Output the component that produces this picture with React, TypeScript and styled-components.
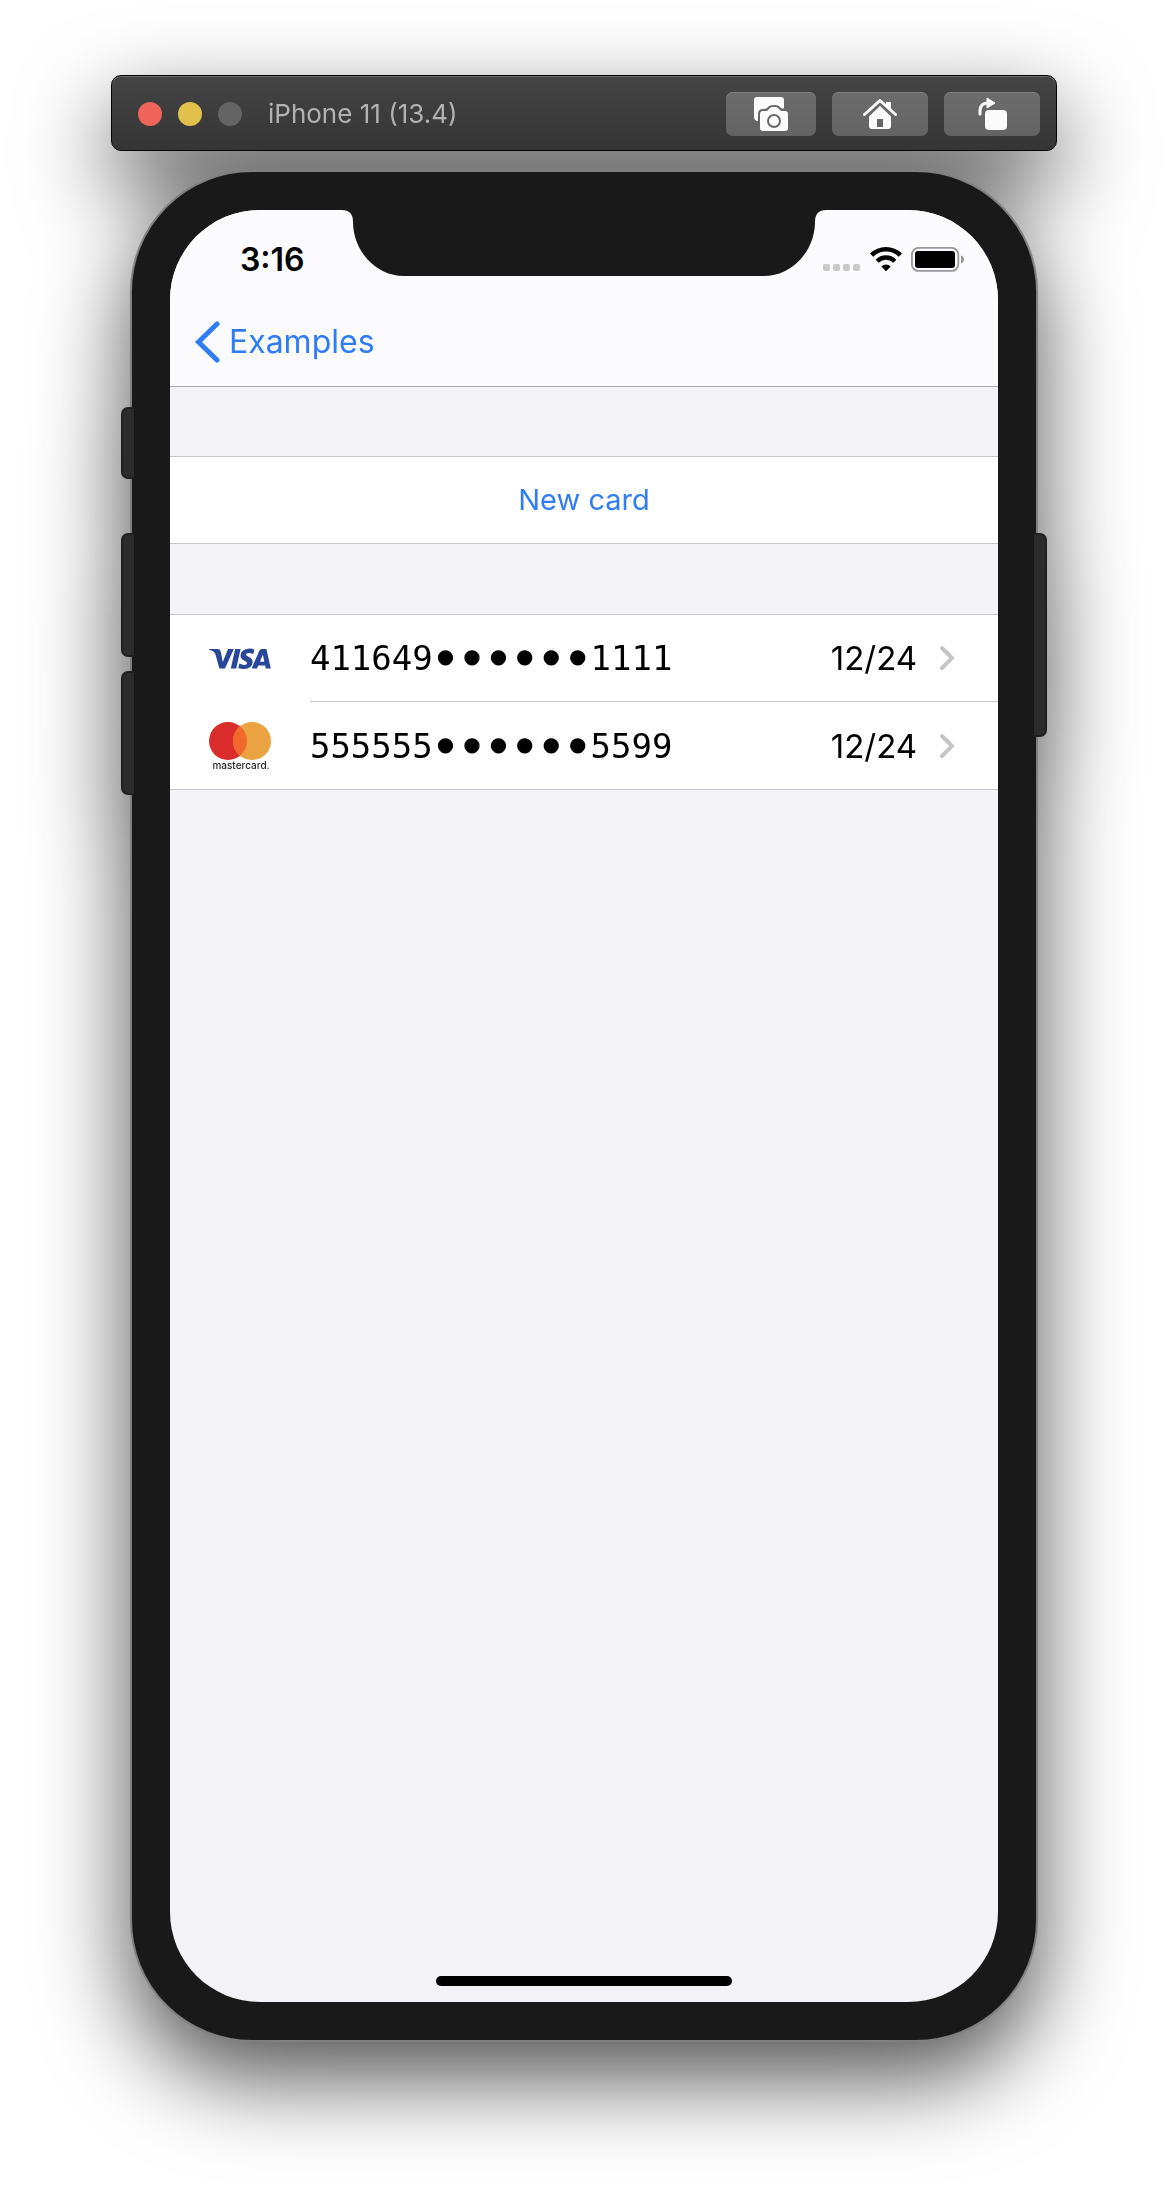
import React from "react";
import styled, { createGlobalStyle } from "styled-components";

const GlobalStyle = createGlobalStyle`
  *, *::before, *::after { box-sizing: border-box; }
  body { margin: 0; background: #ffffff; }
`;

const sans = `Inter, "Liberation Sans", sans-serif`;
const hairline = "#c6c6c8";
const tint = "#2f7cf6";

const Page = styled.main`
  display: flex;
  justify-content: center;
  padding: 75px 24px 148px;
  font-family: ${sans};
`;

const Simulator = styled.div`
  display: flex;
  flex-direction: column;
  align-items: center;
  gap: 19px;
  width: 100%;
  max-width: 946px;
  filter: drop-shadow(0 36px 45px rgba(0, 0, 0, 0.68));
`;

const Toolbar = styled.header`
  display: flex;
  align-items: center;
  justify-content: space-between;
  width: 100%;
  height: 76px;
  padding: 2px 16px 0 26px;
  border: 1px solid #050505;
  border-radius: 10px;
  background: linear-gradient(#444444, #353535);
  box-shadow: inset 0 1px 0 #6c6c6c;
`;

const WindowInfo = styled.div`
  display: flex;
  align-items: center;
  gap: 16px;
`;

const Light = styled.button<{ $color: string }>`
  width: 24px;
  height: 24px;
  padding: 0;
  border: 0;
  border-radius: 50%;
  background: ${(p) => p.$color};
`;

const WindowTitle = styled.h1`
  margin: 0 0 0 10px;
  font-size: 26px;
  line-height: 32px;
  font-weight: 400;
  color: #b2b2b2;
`;

const ToolActions = styled.div`
  display: flex;
  gap: 16px;
`;

const ToolButton = styled.button<{ $width: number }>`
  display: flex;
  align-items: center;
  justify-content: center;
  width: ${(p) => p.$width}px;
  height: 44px;
  padding: 0;
  border: 0;
  border-radius: 7px;
  color: #fbfbfb;
  background: linear-gradient(#6c6c6c, #636363);
  box-shadow: inset 0 1px 0 #808080;
`;

const Phone = styled.div`
  position: relative;
  width: 96%;
  padding: 38px;
  border: 2px solid #808080;
  border-radius: 122px;
  background: #191919;
`;

const SideButton = styled.span<{ $side: "left" | "right"; $top: number; $height: number }>`
  position: absolute;
  ${(p) => p.$side}: -11px;
  top: ${(p) => p.$top}px;
  width: 13px;
  height: ${(p) => p.$height}px;
  border: 2px solid #202020;
  border-${(p) => (p.$side === "left" ? "right" : "left")}: 0;
  border-radius: ${(p) => (p.$side === "left" ? "7px 0 0 7px" : "0 7px 7px 0")};
  background: #2c2c2c;
`;

const Screen = styled.div`
  position: relative;
  display: flex;
  flex-direction: column;
  min-height: 1792px;
  border-radius: 90px;
  overflow: hidden;
  background: #f2f2f7;
`;

const Notch = styled.svg`
  position: absolute;
  top: 0;
  left: 50%;
  width: 484px;
  height: 66px;
  margin-left: -242px;
`;

const TopBar = styled.div`
  border-bottom: 1px solid #a9a9ad;
  background: #fbfbfd;
`;

const StatusBar = styled.div`
  display: flex;
  align-items: center;
  justify-content: space-between;
  height: 88px;
  padding: 12px 34px 0 70px;
`;

const Clock = styled.time`
  font-size: 32px;
  line-height: 36px;
  font-weight: 600;
  color: #000000;
`;

const StatusIcons = styled.div`
  display: flex;
  align-items: center;
  gap: 9px;
  padding-bottom: 2px;
`;

const NavBar = styled.nav`
  display: flex;
  align-items: center;
  height: 88px;
  padding: 0 24px;
`;

const BackLink = styled.a`
  display: flex;
  align-items: center;
  gap: 9px;
  font-size: 32px;
  line-height: 40px;
  color: ${tint};
  text-decoration: none;
`;

const Content = styled.div`
  display: flex;
  flex: 1;
  flex-direction: column;
  gap: 70px;
  padding-top: 69px;
`;

const NewCard = styled.button`
  width: 100%;
  height: 88px;
  padding: 0;
  border: 0;
  border-top: 1px solid ${hairline};
  border-bottom: 1px solid ${hairline};
  background: #ffffff;
  font-family: ${sans};
  font-size: 29px;
  line-height: 40px;
  color: ${tint};
`;

const CardList = styled.ul`
  margin: 0;
  padding: 0;
  list-style: none;
  border-top: 1px solid ${hairline};
  border-bottom: 1px solid ${hairline};
  background: #ffffff;
`;

const CardItem = styled.li`
  &:not(:last-child) > a > div {
    border-bottom: 1px solid ${hairline};
  }
`;

const CardLink = styled.a`
  display: flex;
  color: #000000;
  text-decoration: none;
`;

const BrandCell = styled.span`
  display: flex;
  flex: none;
  align-items: center;
  justify-content: center;
  width: 140px;
  height: 87px;
`;

const CardDetails = styled.div`
  display: flex;
  flex: 1;
  align-items: center;
  height: 87px;
  padding-right: 43px;
`;

const CardNumber = styled.span`
  display: flex;
  flex: 1;
  align-items: center;
  font-family: "DejaVu Sans Mono", "Liberation Mono", monospace;
  font-size: 34px;
  line-height: 40px;
`;

const Mask = styled.span`
  display: flex;
  gap: 9px;
  padding: 0 4px 4px;
  font-family: "DejaVu Sans", sans-serif;
  font-size: 20px;
`;

const Expiry = styled.span`
  margin-right: 22px;
  font-size: 33px;
  line-height: 40px;
`;

const HomeIndicator = styled.div`
  align-self: center;
  width: 296px;
  height: 10px;
  margin-bottom: 16px;
  border-radius: 5px;
  background: #000000;
`;

const ScreenshotIcon = () => (
  <svg width="36" height="36" viewBox="0 0 36 36" aria-hidden="true">
    <path
      d="M4 1h24q3 0 3 3v8q-1 1-3 0l-2-2q-2-1-5-1t-5 1l-2 2q-1 1-4 1-5 0-5 5v7q-4 0-4-4V4q0-3 3-3z"
      fill="currentColor"
    />
    <path
      d="M10 15h4l3-3q1-1 3-1h2q2 0 3 1l3 3h4q3 0 3 3v14q0 3-3 3H10q-3 0-3-3V18q0-3 3-3z"
      fill="currentColor"
    />
    <circle cx="21" cy="25" r="6" fill="none" stroke="#696969" strokeWidth="2" />
  </svg>
);

const HomeIcon = () => (
  <svg width="36" height="32" viewBox="0 0 36 32" aria-hidden="true">
    <path d="M24 4h5v8l-5-4z" fill="currentColor" />
    <path
      fillRule="evenodd"
      d="M18 6.500 29 17v11q0 3-3 3H10q-3 0-3-3V17zM15 21v8h6v-8z"
      fill="currentColor"
    />
    <path d="M4 20 18 6.500 32 20" fill="none" stroke="#696969" strokeWidth="2" />
    <path
      d="M2.500 16.500 18 2.500l15.500 14"
      fill="none"
      stroke="currentColor"
      strokeWidth="3"
      strokeLinecap="round"
      strokeLinejoin="round"
    />
  </svg>
);

const RotateIcon = () => (
  <svg width="32" height="34" viewBox="0 0 32 34" aria-hidden="true">
    <path d="M4 17V14Q4 6 12 6" fill="none" stroke="currentColor" strokeWidth="3" strokeLinecap="round" />
    <path d="m11 1 8 5-8 5z" fill="currentColor" stroke="currentColor" strokeLinejoin="round" />
    <rect x="9" y="13" width="22" height="20" rx="4" fill="currentColor" />
  </svg>
);

const SignalIcon = () => (
  <svg width="38" height="26" viewBox="0 0 38 26" aria-hidden="true">
    {[0, 10, 20, 30].map((x) => (
      <rect key={x} x={x} y="18" width="7" height="7" rx="2" fill="#c9c9cb" />
    ))}
  </svg>
);

const WifiIcon = () => (
  <svg width="32" height="26" viewBox="0 0 32 26" aria-hidden="true">
    <path d="M1.6 9.2a20.4 20.4 0 0 1 28.8 0" fill="none" stroke="#000" strokeWidth="4.6" />
    <path d="M7.2 15.2a12.4 12.4 0 0 1 17.6 0" fill="none" stroke="#000" strokeWidth="4.4" />
    <path d="M16 25.2l-4.7-4.8a6.6 6.6 0 0 1 9.4 0z" fill="#000" />
  </svg>
);

const BatteryIcon = () => (
  <svg width="53" height="26" viewBox="0 0 53 26" aria-hidden="true">
    <rect x="0.9" y="1.9" width="46.4" height="23" rx="6.5" fill="none" stroke="#97979a" strokeWidth="1.8" />
    <rect x="4" y="5" width="40" height="17" rx="3" fill="#000" />
    <path d="M50 9.4q3 1.2 3 4t-3 4z" fill="#97979a" />
  </svg>
);

const BackIcon = () => (
  <svg width="26" height="44" viewBox="0 0 26 44" aria-hidden="true">
    <path
      d="M23 4 4.500 22 23 40"
      fill="none"
      stroke="currentColor"
      strokeWidth="5"
      strokeLinecap="round"
      strokeLinejoin="miter"
    />
  </svg>
);

const DisclosureIcon = () => (
  <svg width="16" height="26" viewBox="0 0 16 26" aria-hidden="true">
    <path d="M3 3 13 13 3 23" fill="none" stroke="#c5c5c7" strokeWidth="4" strokeLinecap="round" />
  </svg>
);

const VisaLogo = () => (
  <svg width="62" height="22" viewBox="0 0 62 22" role="img" aria-label="Visa">
    <g fill="#28479a">
      <path d="M0 1h8.500q2.600 0 3.200 2.400L13.800 14 19 1h5.800L16 20.600h-5.600L6.500 6.500Q6 4.500 4.400 3.500 2.600 2.300 0 1.700z" />
      <path d="M26.200 1h5.400l-4.400 19.600h-5.400z" />
      <path d="M45.400 1.700 44.300 6q-2.600-1.200-4.900-1.100-2.400.1-2.500 1.500 0 1 2.600 2.300 4.300 2 4.200 5.400-.3 6.700-8.900 7-3 0-5.500-1l1.100-4.500q3 1.500 5.300 1.300 2.500-.2 2.500-1.800 0-1-2.700-2.300-4-2-4-5Q32 1.100 40.500.6q2.600-.1 4.900 1.100z" />
      <path fillRule="evenodd" d="M52.600 1H57.400l4.400 19.600h-5l-.6-3h-7l-1.200 3h-5.400l7.600-17.500Q51 1 52.600 1zM53.900 6.400 50.900 13.700h4.400z" />
    </g>
  </svg>
);

const MastercardLogo = () => (
  <svg width="64" height="50" viewBox="0 0 64 50" role="img" aria-label="Mastercard">
    <circle cx="20" cy="20" r="19" fill="#da2c2b" />
    <circle cx="44" cy="20" r="19" fill="#eba240" />
    <path d="M32 5.300a19 19 0 0 1 0 29.400 19 19 0 0 1 0-29.400z" fill="#f0682b" />
    <text x="33" y="48" textAnchor="middle" fontFamily={sans} fontSize="10" fontWeight="500" fill="#231f20">
      mastercard.
    </text>
  </svg>
);

const cards = [
  { first: "411649", last: "1111", expiry: "12/24", Logo: VisaLogo },
  { first: "555555", last: "5599", expiry: "12/24", Logo: MastercardLogo },
];

export default function App() {
  return (
    <>
      <GlobalStyle />
      <Page>
        <Simulator>
          <Toolbar>
            <WindowInfo>
              <Light $color="#f06459" aria-label="Close" />
              <Light $color="#e1c04c" aria-label="Minimize" />
              <Light $color="#646464" aria-label="Zoom" />
              <WindowTitle>iPhone 11 (13.4)</WindowTitle>
            </WindowInfo>
            <ToolActions>
              <ToolButton $width={90} aria-label="Take screenshot"><ScreenshotIcon /></ToolButton>
              <ToolButton $width={96} aria-label="Home"><HomeIcon /></ToolButton>
              <ToolButton $width={96} aria-label="Rotate"><RotateIcon /></ToolButton>
            </ToolActions>
          </Toolbar>
          <Phone>
            <Screen>
              <TopBar>
                <StatusBar>
                  <Clock>3:16</Clock>
                  <StatusIcons>
                    <SignalIcon />
                    <WifiIcon />
                    <BatteryIcon />
                  </StatusIcons>
                </StatusBar>
                <NavBar>
                  <BackLink href="#examples">
                    <BackIcon />
                    Examples
                  </BackLink>
                </NavBar>
              </TopBar>
              <Content>
                <NewCard>New card</NewCard>
                <CardList>
                  {cards.map(({ first, last, expiry, Logo }) => (
                    <CardItem key={first}>
                      <CardLink href={`#card-${last}`}>
                        <BrandCell><Logo /></BrandCell>
                        <CardDetails>
                          <CardNumber>
                            {first}
                            <Mask>
                              {Array.from("●●●●●●", (dot, i) => (
                                <span key={i}>{dot}</span>
                              ))}
                            </Mask>
                            {last}
                          </CardNumber>
                          <Expiry>{expiry}</Expiry>
                          <DisclosureIcon />
                        </CardDetails>
                      </CardLink>
                    </CardItem>
                  ))}
                </CardList>
              </Content>
              <HomeIndicator />
              <Notch viewBox="0 0 484 66" aria-hidden="true">
                <path d="M0 0q11 0 11 12C11 40 33 66 62 66H422C451 66 473 40 473 12q0-12 11-12z" fill="#191919" />
              </Notch>
            </Screen>
            <SideButton $side="left" $top={235} $height={72} />
            <SideButton $side="left" $top={361} $height={124} />
            <SideButton $side="left" $top={499} $height={124} />
            <SideButton $side="right" $top={361} $height={204} />
          </Phone>
        </Simulator>
      </Page>
    </>
  );
}
